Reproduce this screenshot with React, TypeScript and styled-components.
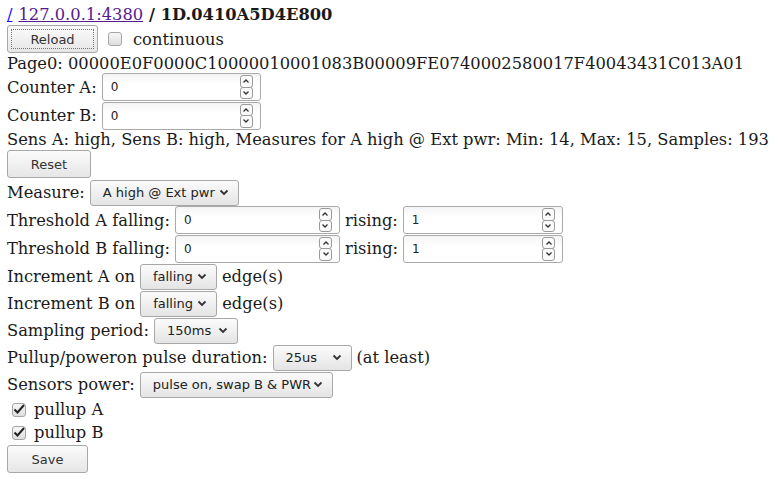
import React from "react";
import styled, { createGlobalStyle } from "styled-components";

const Global = createGlobalStyle`
  html, body { margin: 0; padding: 0; background: #fff; }
  body { font-family: "DejaVu Serif", serif; font-size: 16.3px; color: #1a1a1a; }
`;

const Page = styled.div`
  display: flex;
  flex-direction: column;
  padding: 4px 7px 0 7px;
`;

const Row = styled.div<{ $h: number; $gap?: number }>`
  display: flex;
  align-items: center;
  height: ${(p) => p.$h}px;
  white-space: nowrap;
  gap: ${(p) => p.$gap ?? 5}px;
`;

const Title = styled.div`
  height: 20px;
  display: flex;
  align-items: center;
  gap: 6px;
  white-space: nowrap;
`;

const BlueLink = styled.a`
  color: #1a0dff;
  text-decoration: underline;
`;
const VisitedLink = styled.a`
  color: #551a8b;
  text-decoration: underline;
`;
const Bold = styled.b`
  font-weight: bold;
`;

const Btn = styled.button<{ $w: number; $focus?: boolean }>`
  width: ${(p) => p.$w}px;
  height: 28px;
  margin: 0;
  padding: 0;
  border: 1px solid #a8a8a8;
  border-radius: 3px;
  background: linear-gradient(#fbfbfb, #e6e6e6);
  font-family: "DejaVu Sans", sans-serif;
  font-size: 13px;
  color: #333;
  position: relative;
  &::after {
    content: "";
    display: ${(p) => (p.$focus ? "block" : "none")};
    position: absolute;
    inset: 3px;
    border: 1px dotted #777;
  }
`;

const Field = styled.div<{ $w: number }>`
  width: ${(p) => p.$w}px;
  height: 28px;
  box-sizing: border-box;
  border: 1px solid #a9a9a9;
  border-radius: 3px;
  background: linear-gradient(#f4f4f4, #ffffff 40%);
  display: flex;
  align-items: center;
  justify-content: space-between;
  padding: 0 7px 0 8px;
`;

const FieldText = styled.span`
  font-family: "DejaVu Sans", sans-serif;
  font-size: 12px;
  color: #222;
`;

const Spinner = styled.div`
  display: flex;
  flex-direction: column;
  width: 13px;
  height: 24px;
  justify-content: center;
`;

const SpinPart = styled.div`
  height: 11px;
  border: 1px solid #9a9a9a;
  border-radius: 3px;
  background: #fafafa;
  display: flex;
  align-items: center;
  justify-content: center;
  & + & { margin-top: -1px; }
`;

const Select = styled.div<{ $w: number }>`
  width: ${(p) => p.$w}px;
  height: 26px;
  box-sizing: border-box;
  border: 1px solid #a8a8a8;
  border-radius: 3px;
  background: linear-gradient(#fbfbfb, #e4e4e4);
  display: flex;
  align-items: center;
  justify-content: space-between;
  padding: 0 9px 0 12px;
  font-family: "DejaVu Sans", sans-serif;
  font-size: 13px;
  color: #222;
`;

const CheckRow = styled.label<{ $h: number; $gap: number }>`
  display: flex;
  align-items: center;
  height: ${(p) => p.$h}px;
  gap: ${(p) => p.$gap}px;
  white-space: nowrap;
`;

const Box = styled.span<{ $indent: number }>`
  width: 14px;
  height: 14px;
  box-sizing: border-box;
  margin-left: ${(p) => p.$indent}px;
  border: 1px solid #a6a6a6;
  border-radius: 3px;
  background: linear-gradient(#f7f7f7, #dedede);
  display: flex;
  align-items: center;
  justify-content: center;
`;

const Up = () => (
  <svg width="8" height="6" viewBox="0 0 8 6">
    <path d="M1.5 4.5 L4 2 L6.5 4.5" fill="none" stroke="#333" strokeWidth="1.3" />
  </svg>
);
const Down = () => (
  <svg width="8" height="6" viewBox="0 0 8 6">
    <path d="M1.5 1.5 L4 4 L6.5 1.5" fill="none" stroke="#333" strokeWidth="1.3" />
  </svg>
);

const Chevron = () => (
  <svg width="10" height="7" viewBox="0 0 10 7">
    <path d="M1.5 1.5 L5 5 L8.5 1.5" fill="none" stroke="#333" strokeWidth="1.8" />
  </svg>
);

const Check = () => (
  <svg width="12" height="11" viewBox="0 0 12 11">
    <path d="M1.5 5.5 L4.5 8.5 L11 1" fill="none" stroke="#222" strokeWidth="2" />
  </svg>
);

const NumberField = ({ w, value }: { w: number; value: string }) => (
  <Field $w={w}>
    <FieldText>{value}</FieldText>
    <Spinner>
      <SpinPart>
        <Up />
      </SpinPart>
      <SpinPart>
        <Down />
      </SpinPart>
    </Spinner>
  </Field>
);

const Dropdown = ({ w, value }: { w: number; value: string }) => (
  <Select $w={w}>
    <span>{value}</span>
    <Chevron />
  </Select>
);

const CheckBox = ({ checked, indent }: { checked: boolean; indent: number }) => (
  <Box $indent={indent}>{checked && <Check />}</Box>
);

export default function App() {
  return (
    <>
      <Global />
      <Page>
        <Title>
          <BlueLink href="#">/</BlueLink>
          <VisitedLink href="#">127.0.0.1:4380</VisitedLink>
          <Bold>/ 1D.0410A5D4E800</Bold>
        </Title>
        <Row $h={30} $gap={10}>
          <Btn $w={91} $focus>Reload</Btn>
          <CheckRow $h={30} $gap={11}>
            <CheckBox checked={false} indent={0} />
            continuous
          </CheckRow>
        </Row>
        <Row $h={19}>Page0: 00000E0F0000C10000010001083B00009FE0740002580017F40043431C013A01</Row>
        <Row $h={28}>
          Counter A: <NumberField w={159} value="0" />
        </Row>
        <Row $h={29}>
          Counter B: <NumberField w={159} value="0" />
        </Row>
        <Row $h={19}>Sens A: high, Sens B: high, Measures for A high @ Ext pwr: Min: 14, Max: 15, Samples: 193</Row>
        <Row $h={30}>
          <Btn $w={84}>Reset</Btn>
        </Row>
        <Row $h={27}>
          Measure: <Dropdown w={149} value="A high @ Ext pwr" />
        </Row>
        <Row $h={28}>
          Threshold A falling: <NumberField w={165} value="0" /> rising: <NumberField w={160} value="1" />
        </Row>
        <Row $h={29}>
          Threshold B falling: <NumberField w={165} value="0" /> rising: <NumberField w={160} value="1" />
        </Row>
        <Row $h={27}>
          Increment A on <Dropdown w={77} value="falling" /> edge(s)
        </Row>
        <Row $h={27}>
          Increment B on <Dropdown w={77} value="falling" /> edge(s)
        </Row>
        <Row $h={27}>
          Sampling period: <Dropdown w={84} value="150ms" />
        </Row>
        <Row $h={27}>
          Pullup/poweron pulse duration: <Dropdown w={79} value="25us" /> (at least)
        </Row>
        <Row $h={27}>
          Sensors power: <Dropdown w={193} value="pulse on, swap B & PWR" />
        </Row>
        <CheckRow $h={23} $gap={8}>
          <CheckBox checked indent={5} />
          pullup A
        </CheckRow>
        <CheckRow $h={23} $gap={8}>
          <CheckBox checked indent={5} />
          pullup B
        </CheckRow>
        <Row $h={30}>
          <Btn $w={81}>Save</Btn>
        </Row>
      </Page>
    </>
  );
}
